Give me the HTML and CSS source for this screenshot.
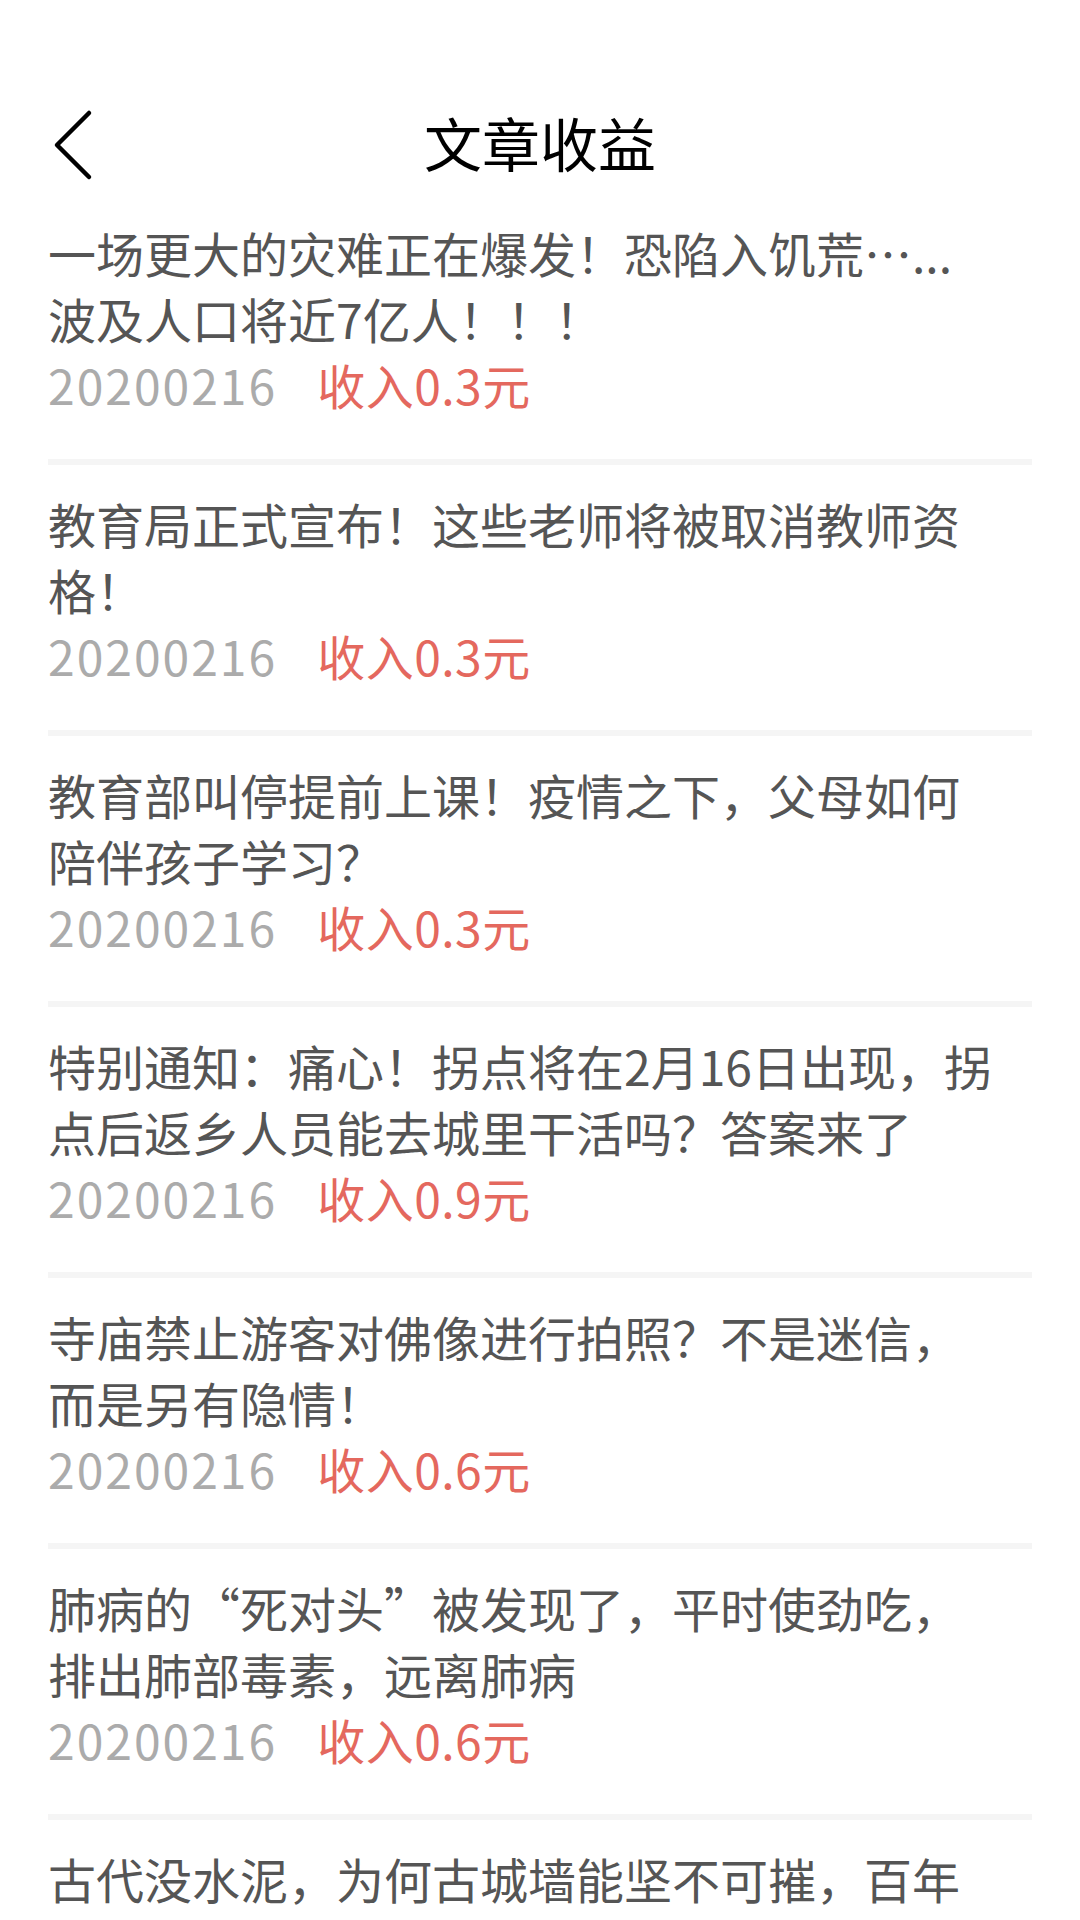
FILE: index.html
```html
<!DOCTYPE html>
<html lang="zh-CN">
<head>
<meta charset="utf-8">
<title>文章收益</title>
<link rel="stylesheet" href="styles.css">
</head>
<body>
<div class="page">
  <header class="header">
    <div class="back">
      <svg class="back-icon" width="44" height="72" viewBox="0 0 44 72">
        <path d="M37 4 L5 36 L37 68" fill="none" stroke="#000" stroke-width="4.5" stroke-linecap="round" stroke-linejoin="round"/>
      </svg>
    </div>
    <h1 class="title">文章收益</h1>
    <div class="spacer"></div>
  </header>
  <ul class="list">
    <li class="item">
      <p class="item-title">一场更大的灾难正在爆发！恐陷入饥荒…...波及人口将近7亿人！！！</p>
      <p class="meta"><span class="date">20200216</span><span class="income">收入0.3元</span></p>
    </li>
    <li class="item">
      <p class="item-title">教育局正式宣布！这些老师将被取消教师资格！</p>
      <p class="meta"><span class="date">20200216</span><span class="income">收入0.3元</span></p>
    </li>
    <li class="item">
      <p class="item-title">教育部叫停提前上课！疫情之下，父母如何陪伴孩子学习？</p>
      <p class="meta"><span class="date">20200216</span><span class="income">收入0.3元</span></p>
    </li>
    <li class="item">
      <p class="item-title">特别通知：痛心！拐点将在2月16日出现，拐点后返乡人员能去城里干活吗？答案来了</p>
      <p class="meta"><span class="date">20200216</span><span class="income">收入0.9元</span></p>
    </li>
    <li class="item">
      <p class="item-title">寺庙禁止游客对佛像进行拍照？不是迷信，而是另有隐情！</p>
      <p class="meta"><span class="date">20200216</span><span class="income">收入0.6元</span></p>
    </li>
    <li class="item">
      <p class="item-title">肺病的“死对头”被发现了，平时使劲吃，排出肺部毒素，远离肺病</p>
      <p class="meta"><span class="date">20200216</span><span class="income">收入0.6元</span></p>
    </li>
    <li class="item">
      <p class="item-title">古代没水泥，为何古城墙能坚不可摧，百年不倒？</p>
      <p class="meta"><span class="date">20200216</span><span class="income">收入0.5元</span></p>
    </li>
  </ul>
</div>
</body>
</html>
```
FILE: styles.css
```css
html, body {
  margin: 0;
  padding: 0;
  background: #ffffff;
}
body {
  font-family: "Noto Sans CJK SC", "Noto Sans", sans-serif;
  overflow: hidden;
}
.page {
  width: 1080px;
}
.header {
  display: grid;
  grid-template-columns: 1fr auto 1fr;
  align-items: center;
  height: 96px;
  padding-top: 97px;
  box-sizing: content-box;
}
.back {
  padding-left: 52px;
  display: flex;
  align-items: center;
}
.back-icon {
  display: block;
}
.title {
  margin: 0;
  padding-bottom: 6px;
  font-size: 58px;
  font-weight: 400;
  color: #000;
  line-height: 90px;
}
.list {
  list-style: none;
  margin: 0;
  padding: 0 48px;
}
.item {
  padding: 25px 0 42px;
  border-top: 6px solid #f5f5f5;
}
.item:first-child {
  border-top: 0;
  padding-top: 26px;
}
.item-title {
  margin: 0;
  padding-right: 37px;
  font-size: 48px;
  line-height: 66px;
  color: #555555;
}
.meta {
  margin: 0;
  font-size: 48px;
  line-height: 66px;
  display: flex;
}
.date {
  color: #ababab;
  letter-spacing: 2px;
}
.income {
  color: #e4685e;
  margin-left: 40px;
  letter-spacing: 0.5px;
}
```
